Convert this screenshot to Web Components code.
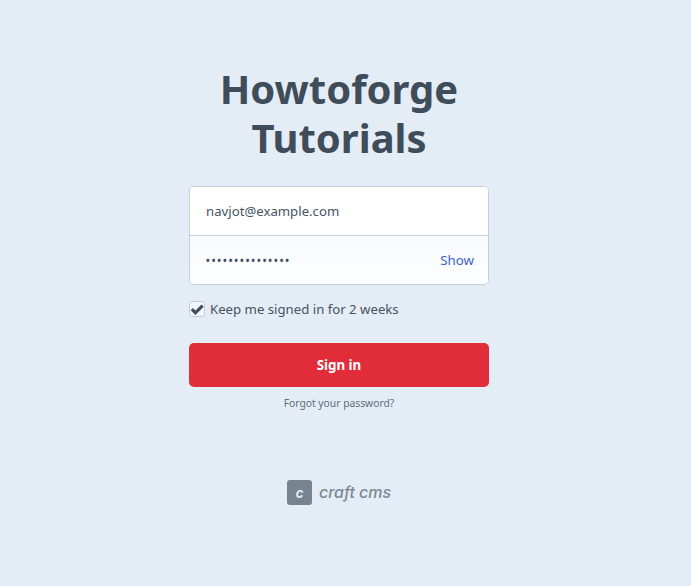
<!DOCTYPE html>
<html lang="en">
<head>
<meta charset="utf-8">
<title>Sign in</title>
<style>
  html, body { margin: 0; height: 100%; background: #e4ecf6; }
</style>
</head>
<body>
<login-page>
  <login-form>
    <login-field value="navjot@example.com"></login-field>
    <login-field value="•••••••••••••••" secret action="Show"></login-field>
  </login-form>
  <login-check>Keep me signed in for 2 weeks</login-check>
  <login-button>Sign in</login-button>
  <craft-mark></craft-mark>
</login-page>
<script>
const fontStack = `"Noto Sans", "Open Sans", "Liberation Sans", sans-serif`

class LoginPage extends HTMLElement {
  constructor (...props) {
    super(...props)
    this.attachShadow({ mode: 'open' }).innerHTML = `
      <style>
        :host {
          display: flex;
          flex-direction: column;
          align-items: center;
          box-sizing: border-box;
          height: 586px;
          padding: 64px 13px 0 0;
          overflow: hidden;
          font-family: ${fontStack};
          color: #3f4d5a;
        }
        h1 {
          margin: 0 0 24px;
          width: 300px;
          font-size: 40px;
          line-height: 49px;
          font-weight: 700;
          text-align: center;
          color: #3f4d5a;
        }
        .column { width: 300px; display: flex; flex-direction: column; }
        .forgot {
          margin-top: 8px;
          font-size: 10.3px;
          line-height: 16px;
          text-align: center;
          color: #5f6c7b;
        }
        .footer { margin-top: 69px; display: flex; justify-content: center; }
      </style>
      <h1>Howtoforge Tutorials</h1>
      <div class="column">
        <slot></slot>
        <div class="forgot">Forgot your password?</div>
        <div class="footer"><slot name="footer"></slot></div>
      </div>
    `
    this.querySelector('craft-mark').slot = 'footer'
  }
}

class LoginForm extends HTMLElement {
  constructor (...props) {
    super(...props)
    this.attachShadow({ mode: 'open' }).innerHTML = `
      <style>
        :host {
          display: flex;
          flex-direction: column;
          box-sizing: border-box;
          height: 99px;
          border: 1px solid #c3cfdd;
          border-radius: 5px;
          overflow: hidden;
          background: #fff;
        }
      </style>
      <slot></slot>
    `
  }
}

class LoginField extends HTMLElement {
  constructor (...props) {
    super(...props)
    const secret = this.hasAttribute('secret')
    const action = this.getAttribute('action')
    this.attachShadow({ mode: 'open' }).innerHTML = `
      <style>
        :host {
          display: flex;
          align-items: center;
          justify-content: space-between;
          box-sizing: border-box;
          flex: 1;
          padding: 0 14px 0 16px;
          font-size: 13.2px;
          background: ${secret ? 'linear-gradient(#f9fbfe, #fbfdff)' : '#fff'};
          ${secret ? 'border-top: 1px solid #c3cfdd;' : ''}
        }
        .value { color: #47535f; }
        .value.dots { font-size: 9.8px; font-weight: 700; letter-spacing: 1.98px; color: #3f4d5a; }
        .action { color: #3f63c5; font-size: 13.3px; }
      </style>
      <span class="value ${secret ? 'dots' : ''}">${this.getAttribute('value')}</span>
      ${action ? `<span class="action">${action}</span>` : ''}
    `
  }
}

class LoginCheck extends HTMLElement {
  constructor (...props) {
    super(...props)
    this.attachShadow({ mode: 'open' }).innerHTML = `
      <style>
        :host {
          display: flex;
          align-items: center;
          gap: 5px;
          margin-top: 15px;
          height: 17px;
          font-size: 13.2px;
          color: #47535f;
        }
        .box {
          box-sizing: border-box;
          width: 16px;
          height: 16px;
          border: 1px solid #c3cfdd;
          border-radius: 3px;
          background: #f3f7fb;
          display: flex;
        }
        svg { width: 14px; height: 14px; }
      </style>
      <span class="box">
        <svg viewBox="0 0 14 14"><path d="M1.8 7.2 5.4 10.8 12.6 3.6" fill="none" stroke="#3f4d5a" stroke-width="3.2"/></svg>
      </span>
      <span><slot></slot></span>
    `
  }
}

class LoginButton extends HTMLElement {
  constructor (...props) {
    super(...props)
    this.attachShadow({ mode: 'open' }).innerHTML = `
      <style>
        :host {
          display: flex;
          align-items: center;
          justify-content: center;
          margin-top: 26px;
          height: 44px;
          border-radius: 5px;
          background: #e12d39;
          color: #fff;
          font-size: 13.3px;
          font-weight: 700;
        }
      </style>
      <slot></slot>
    `
  }
}

class CraftMark extends HTMLElement {
  constructor (...props) {
    super(...props)
    this.attachShadow({ mode: 'open' }).innerHTML = `
      <style>
        :host {
          display: flex;
          align-items: center;
          gap: 7px;
          font-family: "Inter", "Noto Sans", sans-serif;
          color: #7b8994;
        }
        .tile {
          width: 25px;
          height: 25px;
          border-radius: 3px;
          background: #77838e;
          color: #e4ecf6;
          display: flex;
          align-items: center;
          justify-content: center;
          font-size: 13px;
          font-weight: 700;
          font-style: italic;
        }
        .name { padding-bottom: 2px; font-size: 16px; font-weight: 500; font-style: italic; letter-spacing: -0.05px; }
      </style>
      <span class="tile">c</span>
      <span class="name">craft cms</span>
    `
  }
}

window.customElements.define('login-field', LoginField)
window.customElements.define('login-form', LoginForm)
window.customElements.define('login-check', LoginCheck)
window.customElements.define('login-button', LoginButton)
window.customElements.define('craft-mark', CraftMark)
window.customElements.define('login-page', LoginPage)
</script>
</body>
</html>
